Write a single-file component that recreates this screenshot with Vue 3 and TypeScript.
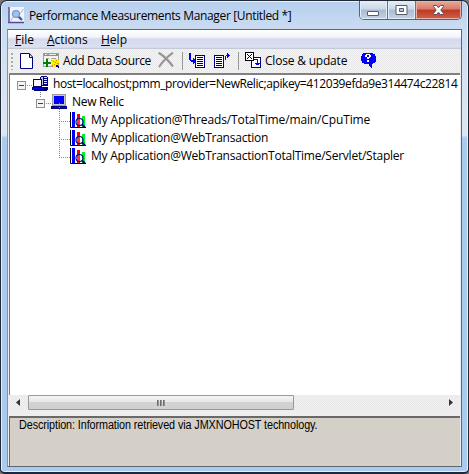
<script setup lang="ts">
interface TreeLeaf {
  label: string
  spacing: string
}

const leaves: TreeLeaf[] = [
  { label: 'My Application@Threads/TotalTime/main/CpuTime', spacing: 'l1' },
  { label: 'My Application@WebTransaction', spacing: 'l2' },
  { label: 'My Application@WebTransactionTotalTime/Servlet/Stapler', spacing: 'l3' },
]
</script>

<template>
  <div class="window">
    <header class="titlebar">
      <svg class="app-icon" width="17" height="17" viewBox="0 0 17 17">
        <rect x="1" y="0" width="15" height="15" fill="#f0f3fb" />
        <path d="M1 0V16M0 15.500H16" stroke="#4b4b96" stroke-width="1.4" />
        <path d="M2.500 14L6 9L9 11L15.500 2" fill="none" stroke="#a9addb" />
        <circle cx="8" cy="7" r="3.400" fill="#9cc4f5" stroke="#7d97cc" stroke-width="1.3" />
        <path d="M10.800 9.800L14 13" stroke="#43599f" stroke-width="2.400" />
      </svg>
      <span class="title">Performance Measurements Manager [Untitled *]</span>
      <div class="controls">
        <button class="ctl" aria-label="Minimize">
          <svg width="13" height="11" viewBox="0 0 13 11"><rect x=".5" y="6.5" width="11" height="4" rx=".5" fill="#fff" stroke="#555c6b" /></svg>
        </button>
        <button class="ctl" aria-label="Maximize">
          <svg width="13" height="11" viewBox="0 0 13 11"><path fill-rule="evenodd" d="M1 .5H12V9.500H1ZM4.500 3.500H8.500V6.500H4.500Z" fill="#fff" stroke="#555c6b" /></svg>
        </button>
        <button class="ctl close" aria-label="Close">
          <svg width="13" height="11" viewBox="0 0 13 11"><path d="M1.500 .5H4.800L6.500 2.800L8.200 .5H11.500V1.500L8.800 5L11.500 8.500V9.500H8.200L6.500 7.200L4.800 9.500H1.500V8.500L4.200 5L1.500 1.500Z" fill="#fff" stroke="#5a5060" /></svg>
        </button>
      </div>
    </header>

    <main class="client">
      <nav class="menubar">
        <span class="m-file"><u>F</u>ile</span>
        <span class="m-actions"><u>A</u>ctions</span>
        <span><u>H</u>elp</span>
      </nav>

      <div class="toolbar">
        <i class="grip"></i>
        <svg class="i-new" width="14" height="16" viewBox="0 0 14 16">
          <path d="M.5 .5H9.500L12.500 4V15.500H.5Z" fill="#fff" stroke="#000080" />
          <path d="M9.500 1V4.500H12" fill="none" stroke="#000080" />
        </svg>
        <svg class="i-add" width="17" height="16" viewBox="0 0 17 16" shape-rendering="crispEdges">
          <path d="M.5 .5H15.500V13.500H.5Z" fill="#f2f2ee" stroke="#9a9f98" />
          <path d="M1 1H15V3H1Z" fill="#8b9089" />
          <path d="M2 1.500H4M6 1.500H13" stroke="#e9ede5" />
          <path d="M3 5.500H6M8 5.500H13M8 7.500H10" stroke="#a7aaa2" />
          <path d="M4 6V14M0 10H8" stroke="#008000" stroke-width="2" />
          <path d="M9 7H11V6H14V7H16V10H15V13H13V14H10V13H8V11H9Z" fill="#fff000" />
          <path d="M10 8H11V9H10ZM13 7H14V8H13ZM11 11H12V12H11ZM9 12H10V13H9ZM14 10H15V11H14ZM12 9H13V10H12Z" fill="#f07800" />
          <path d="M13 12H15V13H16V15H15V14H13Z" fill="#000090" />
        </svg>
        <span class="t-add">Add Data Source</span>
        <svg class="i-del" width="16" height="16" viewBox="0 0 16 16">
          <path d="M.7 .7C6 4 11 9 15 14.500M15 .7C9 5 5 9 1 15" fill="none" stroke="#969696" stroke-width="2.200" />
        </svg>
        <i class="sep s1"></i>
        <svg class="i-import" width="17" height="16" viewBox="0 0 17 16" shape-rendering="crispEdges">
          <path d="M6.500 2.500H15.500V14.500H6.500Z" fill="#fff" stroke="#000080" />
          <path d="M8 4.500H14M8 6.500H14M8 8.500H14M8 10.500H14M8 12.500H14" stroke="#000050" />
          <path d="M0 0H2V7H4V5H5V6H6V10H5V11H4V9H2V8H1V7H0Z" fill="#00f" />
        </svg>
        <svg class="i-export" width="17" height="16" viewBox="0 0 17 16" shape-rendering="crispEdges">
          <path d="M.5 2.500H9.500V14.500H.5Z" fill="#fff" stroke="#000080" />
          <path d="M2 4.500H8M2 6.500H8M2 8.500H8M2 10.500H8M2 12.500H8" stroke="#000050" />
          <path d="M11 7V3H12V2H13V0H14V1H15V2H16V3H15V4H14V5H13V3H12V7Z" fill="#00f" />
        </svg>
        <i class="sep s2"></i>
        <svg class="i-update" width="17" height="16" viewBox="0 0 17 16" shape-rendering="crispEdges">
          <path d="M6.500 5.500H15.500V15.500H6.500Z" fill="#fff" stroke="#000080" />
          <path d="M.5 .5H8.500V8.500H.5Z" fill="#fff" stroke="#000" />
          <path d="M2 2H3V3H4V4H5V3H6V2H7V3H6V4H5V5H6V6H7V7H6V6H5V5H4V6H3V7H2V6H3V5H4V4H3V3H2Z" fill="#000" />
          <path d="M9 7.500H12.500V13M10 11.500H15M11 12.500H14" fill="none" stroke="#00f" />
        </svg>
        <span class="t-close">Close &amp; update</span>
        <svg class="i-help" width="15" height="15" viewBox="0 0 15 15" shape-rendering="crispEdges">
          <path d="M2 0H12V1H14V3H15V9H14V10H12V11H11V15H10V14H9V13H8V11H3V10H1V8H0V3H1V1H2Z" fill="#00f" />
          <path d="M4 2H5V1H9V2H10V4H9V5H8V6H6V4H8V2H6V4H4ZM6 7H8V9H6Z" fill="#fff" />
        </svg>
      </div>

      <section class="tree">
        <div class="row root">
          <i class="toggle"></i><i class="dots"></i>
          <svg class="pc" width="16" height="16" viewBox="0 0 16 16" shape-rendering="crispEdges">
            <path d="M9 0H15V1H16V10H8V1H9Z" fill="#000080" />
            <path d="M9 1H11V9H9Z" fill="#c3c9d8" />
            <path d="M12 1H15V2H12ZM12 3H15V4H12ZM12 5H15V6H12ZM12 7H15V8H12Z" fill="#e6e9f4" />
            <path d="M1 3H10V11H1Z" fill="#000080" />
            <path d="M2 4H9V10H2Z" fill="#f7f7fb" />
            <path d="M0 11H16V14H0Z" fill="#000080" />
            <path d="M1 12H12V13H1Z" fill="#0000e0" />
            <path d="M2 14H15V15H2Z" fill="#000060" />
          </svg>
          <span class="r0">host=localhost;pmm_provider=NewRelic;apikey=412039efda9e314474c22814</span>
        </div>
        <div class="row branch">
          <i class="toggle"></i><i class="dots"></i>
          <svg class="pc" width="16" height="16" viewBox="0 0 16 16" shape-rendering="crispEdges">
            <path d="M1 0H15V12H1Z" fill="#9c9c9c" />
            <path d="M2 1H14V11H2Z" fill="#c9c9c9" />
            <path d="M3 2H13V10H3Z" fill="#00f" />
            <path d="M0 12H16V15H0Z" fill="#000080" />
            <path d="M1 13H15V14H1Z" fill="#0000d8" />
          </svg>
          <span class="r1">New Relic</span>
        </div>
        <div v-for="leaf in leaves" :key="leaf.label" class="row leaf">
          <i class="dots"></i>
          <svg class="pc" width="16" height="16" viewBox="0 0 16 16">
            <path d="M2 0H5V15H2Z" fill="#00f" />
            <path d="M7 2H10V15H7Z" fill="#f00" />
            <path d="M12 4H15V15H12Z" fill="#0e2" />
            <path d="M.5 0V15.500H16" fill="none" stroke="#000" />
            <circle cx="9.500" cy="10" r="3.500" fill="#fff" fill-opacity=".2" stroke="#000080" stroke-width="1.100" />
            <path d="M12 12.500L15 15.500" stroke="#000080" stroke-width="2" />
          </svg>
          <span :class="leaf.spacing">{{ leaf.label }}</span>
        </div>
      </section>

      <div class="scrollbar">
        <svg class="arrow" width="4" height="7" viewBox="0 0 4 7"><path d="M4 0V7L0 3.500Z" fill="#333" /></svg>
        <div class="thumb"><i></i><i></i><i></i></div>
        <svg class="arrow right" width="4" height="7" viewBox="0 0 4 7"><path d="M0 0V7L4 3.500Z" fill="#333" /></svg>
      </div>
      <footer class="description"><span>Description: Information retrieved via JMXNOHOST technology.</span></footer>
    </main>
  </div>
</template>

<style>
body { margin: 0; background: #777; overflow: hidden; }
</style>

<style scoped>
* { box-sizing: border-box; }
.window {
  width: 469px; height: 474px; padding: 0 6px 6px 6px;
  border: 1px solid #202735; border-width: 1px 1px 2px 1px; border-radius: 7px 7px 5px 5px;
  box-shadow: inset 0 0 0 1px #e4f0fb;
  background: linear-gradient(180deg, #b5cfee 0, #cbdcf1 28px, #d5e2f2 75px, #dce7f4 134px, #abcbee 137px, #abcbee 100%);
  font: 12px/18px "Open Sans", "Noto Sans", sans-serif; color: #000;
  display: flex; flex-direction: column; overflow: hidden; white-space: nowrap;
}
svg { display: block; flex: none; }
i { display: block; flex: none; }
.titlebar { height: 28px; flex: none; display: flex; align-items: flex-start; }
.app-icon { margin: 6px 0 0 1px; }
.title { margin: 6px 0 0 4px; width: 264px; letter-spacing: -0.35px; }
.controls {
  margin-left: auto; width: 103px; height: 19px; display: flex;
  border: 1px solid #52647d; border-top: 0; border-radius: 0 0 5px 5px; overflow: hidden;
}
.ctl {
  width: 28px; padding: 0; border: 0; border-right: 1px solid #63738a; display: flex; align-items: center; justify-content: center;
  background: linear-gradient(#e5edf7 0, #cbd8e9 45%, #a9bbd2 50%, #c3d3e7 100%);
  box-shadow: inset 0 0 0 1px #e3edf8;
}
.ctl.close { flex: 1; border-right: 0; background: linear-gradient(#e9aa99 0, #d77b67 45%, #bd3824 50%, #ce6249 100%); box-shadow: inset 0 0 0 1px #e8b2a8; }

.client { height: 438px; border: 1px solid #60676f; border-left-color: #8b9198; background: #eeeeee; display: flex; flex-direction: column; }
.menubar {
  height: 19px; flex: none; display: flex; padding-left: 7px; line-height: 20px;
  background: linear-gradient(#fff 0, #f3f5fb 35%, #d5daed 50%, #dbe1f1 90%, #bcc1d0 100%);
}
.m-file { width: 32px; letter-spacing: 0; }
.m-actions { width: 54px; letter-spacing: -.05px; }
.menubar u { text-decoration-thickness: 1px; text-underline-offset: 1px; }
.toolbar { height: 24px; flex: none; display: flex; align-items: flex-start; padding: 4px 0 0 3px; background: repeating-conic-gradient(#e9e9e9 0 25%, #f3f3f3 0 50%) 0 0 / 2px 2px; }
.grip { width: 2px; height: 17px; background: repeating-linear-gradient(#aaa 0 2px, #f3f3f3 2px 4px); }
.i-new { margin-left: 7px; }
.i-add { margin-left: 9px; }
.t-add { margin: -1px 0 0 3px; width: 89px; letter-spacing: -.36px; }
.i-del { margin-left: 6px; margin-top: -1px; }
.sep { width: 1px; height: 18px; margin-top: -1px; background: #999; }
.s1 { margin-left: 8px; }
.i-import { margin-left: 6px; }
.i-export { margin-left: 8px; }
.s2 { margin-left: 7px; }
.i-update { margin-left: 6px; margin-top: -1px; }
.t-close { margin: -1px 0 0 3px; width: 83px; letter-spacing: -.2px; }
.i-help { margin: 0 0 0 13px; }

.tree { width: 451px; height: 322px; margin-left: 1px; flex: none; overflow: hidden; background: #fff; border-top: 2px solid #808080; border-left: 1px solid #777; }
.row { height: 18px; display: flex; align-items: center; position: relative; }
.root { padding-left: 7px; }
.branch { padding-left: 26px; }
.leaf { padding-left: 49px; }
.toggle { width: 9px; height: 9px; margin-top: 2px; border: 1px solid #919191; background: linear-gradient(#345, #345) 1px 3px / 5px 1px no-repeat, #f4f4f4; }
.dots { width: 5px; height: 1px; margin: 2px 0 0 1px; background: repeating-linear-gradient(90deg, #888 0 1px, transparent 1px 2px); }
.leaf .dots { width: 11px; margin-left: 0; }
.row::before { content: ''; position: absolute; width: 1px; background: repeating-linear-gradient(#888 0 1px, transparent 1px 2px); }
.branch::before { left: 30px; top: -1px; height: 6px; }
.leaf::before { left: 49px; top: -8px; height: 18px; }
.pc { margin-right: 5px; }
.r0 { letter-spacing: -.405px; }
.r1 { letter-spacing: -.28px; }
.l1 { letter-spacing: -.13px; }
.l2, .l3 { letter-spacing: -.24px; }

.scrollbar { width: 452px; height: 15px; flex: none; display: flex; align-items: center; padding: 0 7px 0 8px; background: repeating-conic-gradient(#e8e8e8 0 25%, #f1f1f1 0 50%) 0 0 / 2px 2px; }
.thumb {
  width: 266px; height: 15px; margin-left: 8px; border: 1px solid #999; border-radius: 1px;
  background: linear-gradient(#f4f4f4 0, #e7e7e7 45%, #d1d2d5 50%, #d0d0d0 100%);
  display: flex; align-items: center; justify-content: center; gap: 1px;
}
.thumb i { width: 2px; height: 6px; background: linear-gradient(90deg, #555, #aaa); }
.right { margin-left: auto; }
.description { width: 451px; height: 50px; margin: 6px 0 0 1px; flex: none; background: #d4d0c8; border: 2px solid #696969; border-left-width: 1px; border-right-width: 0; border-bottom: 0; padding: 0 0 0 9px; font: 12px/15px "Liberation Sans", Arial, sans-serif; }
.description span { display: inline-block; letter-spacing: -.1px; transform: scaleX(.9); transform-origin: 0 0; }
</style>
